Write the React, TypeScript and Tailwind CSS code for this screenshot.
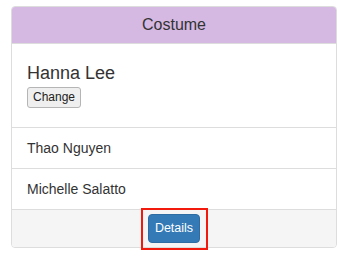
export default function App() {
  const rows = ['Thao Nguyen', 'Michelle Salatto'];

  return (
    <div className="h-[259px] w-[344px] bg-white pt-[6px] pl-[11px] font-['Liberation_Sans',Arial,sans-serif] text-[#333]">
      <div className="w-[326px] rounded-[4px] border border-[#ddd]">
        {/* Header */}
        <div className="flex h-[37px] items-center justify-center rounded-t-[3px] border-b border-[#ddd] bg-[#d5b9e3] text-[16px]">
          Costume
        </div>

        {/* Current */}
        <div className="px-[15px] pt-[18px] pb-[19px]">
          <div className="text-[18px] leading-[22px]">Hanna Lee</div>
          <button className="mt-[1px] h-[21px] rounded-[3px] border border-[#b5b5b5] bg-[#efefef] px-[5px] text-[12px] leading-none text-[#222]">
            Change
          </button>
        </div>

        {/* Others */}
        {rows.map((name) => (
          <div key={name} className="flex h-[41px] items-center border-t border-[#ddd] px-[15px] text-[14px]">
            {name}
          </div>
        ))}

        {/* Footer */}
        <div className="flex justify-center rounded-b-[3px] border-t border-[#ddd] bg-[#f5f5f5] py-[4px]">
          <div className="relative">
            <button className="h-[29px] rounded-[4px] border border-[#2e6da4] bg-[#337ab7] px-[6px] text-[12.5px] text-white">
              Details
            </button>
            <span className="pointer-events-none absolute -top-[6px] -bottom-[7px] -left-[7px] -right-[8px] border-2 border-[#f21a0c]" />
          </div>
        </div>
      </div>
    </div>
  );
}
